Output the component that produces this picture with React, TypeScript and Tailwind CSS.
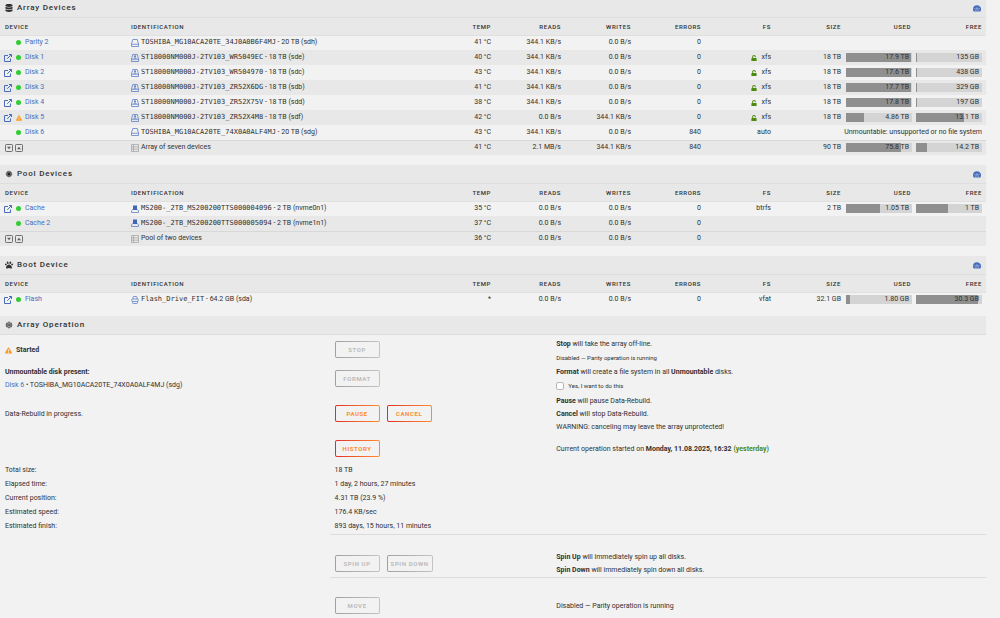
import React from "react";
import { FaDatabase, FaPaw, FaExclamationTriangle, FaUnlock } from "react-icons/fa";

type Status = "ok" | "warn";
type DriveKind = "drive" | "user" | "nvme" | "usb";
type Meter = { text: string; pct: number };

interface Device {
  name: string;
  status: Status;
  browse?: boolean;
  kind: DriveKind;
  id: string;
  detail: string;
  temp: string;
  reads: string;
  writes: string;
  errors: string;
  fs?: string;
  locked?: boolean;
  size?: string;
  used?: Meter;
  free?: Meter;
  message?: string;
}

interface Total {
  label: string;
  temp: string;
  reads: string;
  writes: string;
  errors: string;
  size?: string;
  used?: Meter;
  free?: Meter;
}

const rate = { reads: "344.1 KB/s", writes: "0.0 B/s", errors: "0" };

const arrayDevices: Device[] = [
  { name: "Parity 2", status: "ok", kind: "drive", id: "TOSHIBA_MG10ACA20TE_34J0A0B6F4MJ", detail: "20 TB (sdh)", temp: "41 °C", ...rate },
  { name: "Disk 1", status: "ok", browse: true, kind: "user", id: "ST18000NM000J-2TV103_WR5049EC", detail: "18 TB (sde)", temp: "40 °C", ...rate, fs: "xfs", locked: true, size: "18 TB", used: { text: "17.9 TB", pct: 99 }, free: { text: "135 GB", pct: 1 } },
  { name: "Disk 2", status: "ok", browse: true, kind: "user", id: "ST18000NM000J-2TV103_WR504970", detail: "18 TB (sdc)", temp: "43 °C", ...rate, fs: "xfs", locked: true, size: "18 TB", used: { text: "17.6 TB", pct: 98 }, free: { text: "438 GB", pct: 2 } },
  { name: "Disk 3", status: "ok", browse: true, kind: "user", id: "ST18000NM000J-2TV103_ZR52X6DG", detail: "18 TB (sdb)", temp: "41 °C", ...rate, fs: "xfs", locked: true, size: "18 TB", used: { text: "17.7 TB", pct: 98 }, free: { text: "329 GB", pct: 2 } },
  { name: "Disk 4", status: "ok", browse: true, kind: "user", id: "ST18000NM000J-2TV103_ZR52X75V", detail: "18 TB (sdd)", temp: "38 °C", ...rate, fs: "xfs", locked: true, size: "18 TB", used: { text: "17.8 TB", pct: 99 }, free: { text: "197 GB", pct: 1 } },
  { name: "Disk 5", status: "warn", browse: true, kind: "user", id: "ST18000NM000J-2TV103_ZR52X4M8", detail: "18 TB (sdf)", temp: "42 °C", reads: "0.0 B/s", writes: "344.1 KB/s", errors: "0", fs: "xfs", locked: true, size: "18 TB", used: { text: "4.86 TB", pct: 27 }, free: { text: "13.1 TB", pct: 73 } },
  { name: "Disk 6", status: "ok", kind: "drive", id: "TOSHIBA_MG10ACA20TE_74X0A0ALF4MJ", detail: "20 TB (sdg)", temp: "43 °C", reads: "344.1 KB/s", writes: "0.0 B/s", errors: "840", fs: "auto", message: "Unmountable: unsupported or no file system" },
];

const poolDevices: Device[] = [
  { name: "Cache", status: "ok", browse: true, kind: "nvme", id: "MS200-_2TB_MS200200TTS000004096", detail: "2 TB (nvme0n1)", temp: "35 °C", reads: "0.0 B/s", writes: "0.0 B/s", errors: "0", fs: "btrfs", size: "2 TB", used: { text: "1.05 TB", pct: 51 }, free: { text: "1 TB", pct: 49 } },
  { name: "Cache 2", status: "ok", kind: "nvme", id: "MS200-_2TB_MS200200TTS000005094", detail: "2 TB (nvme1n1)", temp: "37 °C", reads: "0.0 B/s", writes: "0.0 B/s", errors: "0" },
];

const bootDevices: Device[] = [
  { name: "Flash", status: "ok", browse: true, kind: "usb", id: "Flash_Drive_FIT", detail: "64.2 GB (sda)", temp: "*", reads: "0.0 B/s", writes: "0.0 B/s", errors: "0", fs: "vfat", size: "32.1 GB", used: { text: "1.80 GB", pct: 6 }, free: { text: "30.3 GB", pct: 94 } },
];

function DiscIcon() {
  return (
    <svg viewBox="0 0 16 16" className="size-2" aria-hidden="true">
      <circle cx="8" cy="8" r="5.5" fill="#666" stroke="#555" strokeWidth="2" strokeDasharray="2 1" />
      <circle cx="8" cy="8" r="2.5" fill="#222" />
    </svg>
  );
}

function SnowflakeIcon() {
  return (
    <svg viewBox="0 0 16 16" className="size-2" fill="none" stroke="#444" strokeWidth="1.5" aria-hidden="true">
      <path d="M8 1v14M2 4.500l12 7M14 4.500l-12 7" />
      <path d="M5.500 2 8 4.500 10.500 2M5.500 14 8 11.500 10.500 14M1.500 7.500 5 6.500 4 3M14.500 8.500 11 9.500l1 3.500M14.500 7.500 11 6.500 12 3M1.500 8.500 5 9.500l-1 3.500" />
    </svg>
  );
}

function GaugeIcon() {
  return (
    <svg viewBox="0 0 16 14" className="h-[7px] w-2" aria-hidden="true">
      <path d="M8 0.500A8 8 0 0 0 0 8.500c0 1.700.5 3.200 1.300 4.500h13.400A8 8 0 0 0 8 .5Z" fill="#486dba" />
      <path d="M5.500 12 6.500 6h3l1 6" fill="none" stroke="#c3cde2" strokeWidth="1.300" />
      <circle cx="3.300" cy="7" r="0.800" fill="#c3cde2" />
      <circle cx="12.700" cy="7" r="0.800" fill="#c3cde2" />
    </svg>
  );
}

function BrowseIcon() {
  return (
    <svg viewBox="0 0 16 16" className="size-2" fill="none" stroke="#486dba" strokeWidth="2" aria-hidden="true">
      <path d="M8 3H1v12h12V9" />
      <path d="M10 1h5v5M15 1 6.500 9.500" />
    </svg>
  );
}

function DriveIcon({ kind }: { kind: DriveKind }) {
  return (
    <svg viewBox="0 0 16 16" className="size-2 shrink-0" fill="none" stroke="#5f80c4" strokeWidth="1.600" strokeLinejoin="round" aria-hidden="true">
      {kind === "usb" && (
        <>
          <path d="M4 6V2.500Q4 1 5.500 1h5Q12 1 12 2.500V6" />
          <rect x="1.500" y="6" width="13" height="5" rx="1.500" />
          <path d="M3 11v2.500Q3 15 4.500 15h7q1.500 0 1.500-1.500V11" />
        </>
      )}
      {kind === "nvme" && (
        <>
          <path d="M4 1h8v7l1 2H3l1-2Z" fill="#3f66b8" stroke="none" />
          <path d="M3.500 9.500 1 11.500V15h14v-3.500L12.500 9.500" />
        </>
      )}
      {(kind === "drive" || kind === "user") && (
        <>
          <path d="M1 10 3.500 1h9L15 10v5H1Z" />
          <path d="M1 10.500h14" />
        </>
      )}
      {kind === "user" && (
        <>
          <circle cx="8" cy="4.500" r="1.800" fill="#486dba" stroke="none" />
          <path d="M4.500 9Q8 4.500 11.500 9Z" fill="#486dba" stroke="none" />
        </>
      )}
    </svg>
  );
}

function ListIcon() {
  return (
    <svg viewBox="0 0 16 16" className="size-2 shrink-0" fill="none" stroke="#9a9a9a" strokeWidth="1.300" aria-hidden="true">
      <path d="M1 1h14v14H1ZM1 5.700h14M1 10.300h14M5 1v14" />
    </svg>
  );
}

function ToggleButton({ up }: { up?: boolean }) {
  return (
    <button type="button" aria-label={up ? "Spin up" : "Spin down"} className="size-2">
      <svg viewBox="0 0 16 16" className="size-2" fill="none" stroke="#707070" strokeWidth="2" aria-hidden="true">
        <rect x="1" y="1" width="14" height="14" rx="1.500" />
        <path d={up ? "M4 10.500h8L8 5.500Z" : "M4 5.500h8L8 10.500Z"} fill="#606060" stroke="none" />
      </svg>
    </button>
  );
}

function SectionTitle({ icon, title, gauge }: { icon: React.ReactNode; title: string; gauge?: boolean }) {
  return (
    <div className="flex h-[19px] items-center justify-between border-b border-[#dedede] bg-[#e8e8e8] px-[5px]">
      <h2 className="flex items-center gap-1 text-[8px] leading-none font-medium tracking-[0.1em]">
        {icon}
        {title}
      </h2>
      {gauge && (
        <a href="#stats" aria-label={title + " statistics"}>
          <GaugeIcon />
        </a>
      )}
    </div>
  );
}

function UsageBar({ meter }: { meter: Meter }) {
  return (
    <div className="relative h-[9px] bg-[#d4d4d4]">
      <div className="absolute inset-y-0 left-0 bg-[#8f8f8f]" style={{ width: meter.pct + "%" }} />
      <span className="absolute inset-0 pr-[3px] leading-[9px]">{meter.text}</span>
    </div>
  );
}

const numeric = ["Temp", "Reads", "Writes", "Errors", "FS", "Size", "Used", "Free"];

function DeviceTable({ devices, total }: { devices: Device[]; total?: Total }) {
  return (
    <table className="w-full table-fixed border-collapse">
      <colgroup>
        <col className="w-[131px]" />
        <col />
        {numeric.map((n) => (
          <col key={n} className={n === "Free" ? "w-[72px]" : "w-[70px]"} />
        ))}
      </colgroup>
      <thead>
        <tr className="h-[17px] border-b border-[#e0e0e0] bg-[#e8e8e8] text-[6px] tracking-[0.1em] uppercase">
          <th className="pl-[5px] text-left font-medium">Device</th>
          <th className="text-left font-medium">Identification</th>
          {numeric.map((n) => (
            <th key={n} className={n === "Free" ? "pr-1 text-right font-medium" : "pr-[3px] text-right font-medium"}>
              {n}
            </th>
          ))}
        </tr>
      </thead>
      <tbody>
        {devices.map((d) => (
          <tr key={d.name} className="h-[15px] text-right even:bg-[#e8e8e8]">
            <td className="pl-1 text-left">
              <div className="flex items-center">
                <span className="w-[12px]">
                  {d.browse && (
                    <a href="#browse" aria-label={"Browse " + d.name}>
                      <BrowseIcon />
                    </a>
                  )}
                </span>
                <span className="w-[9px]">
                  {d.status === "ok" ? (
                    <span className="block size-[5px] rounded-full bg-[#33cc33]" />
                  ) : (
                    <FaExclamationTriangle className="size-[6px] text-[#ff9a1f]" />
                  )}
                </span>
                <a href="#device" className="text-[#486dba]">
                  {d.name}
                </a>
              </div>
            </td>
            <td className="text-left">
              <div className="flex items-center gap-[2px] whitespace-nowrap">
                <DriveIcon kind={d.kind} />
                <span>
                  <span className="font-['DejaVu_Sans_Mono','Liberation_Mono',monospace]">{d.id}</span> - {d.detail}
                </span>
              </div>
            </td>
            <td className="pr-[3px]">{d.temp}</td>
            <td className="pr-[3px]">{d.reads}</td>
            <td className="pr-[3px]">{d.writes}</td>
            <td className="pr-[3px]">{d.errors}</td>
            <td className="pr-[3px]">
              <div className="flex items-center justify-end gap-1">
                {d.locked && <FaUnlock className="size-[6px] text-[#4f8a10]" />}
                {d.fs}
              </div>
            </td>
            {d.message ? (
              <td colSpan={3} className="pr-1 whitespace-nowrap">
                {d.message}
              </td>
            ) : (
              <>
                <td className="pr-[3px]">{d.size}</td>
                <td className="px-[2px]">{d.used && <UsageBar meter={d.used} />}</td>
                <td className="pr-1 pl-[2px]">{d.free && <UsageBar meter={d.free} />}</td>
              </>
            )}
          </tr>
        ))}
      </tbody>
      {total && (
        <tfoot>
          <tr className="h-[15px] border-t border-[#d8d8d8] bg-[#e8e8e8] text-right">
            <td className="pl-[5px]">
              <div className="flex gap-[2px]">
                <ToggleButton />
                <ToggleButton up />
              </div>
            </td>
            <td className="text-left">
              <div className="flex items-center gap-[2px] whitespace-nowrap">
                <ListIcon />
                {total.label}
              </div>
            </td>
            <td className="pr-[3px]">{total.temp}</td>
            <td className="pr-[3px]">{total.reads}</td>
            <td className="pr-[3px]">{total.writes}</td>
            <td className="pr-[3px]">{total.errors}</td>
            <td />
            <td className="pr-[3px]">{total.size}</td>
            <td className="px-[2px]">{total.used && <UsageBar meter={total.used} />}</td>
            <td className="pr-1 pl-[2px]">{total.free && <UsageBar meter={total.free} />}</td>
          </tr>
        </tfoot>
      )}
    </table>
  );
}

function OpButton({ label, disabled }: { label: string; disabled?: boolean }) {
  return (
    <button
      type="button"
      disabled={disabled}
      className="flex h-[17px] min-w-[45px] rounded-[2px] bg-linear-to-r from-[#e22828] to-[#ff8c2f] p-px text-[6px] font-bold tracking-[0.1em] text-[#ff8c2f] uppercase disabled:from-[#a0a0a0] disabled:to-[#c4c4c4] disabled:text-[#bcbcbc]"
    >
      <span className="flex h-full w-full items-center justify-center rounded-[1px] bg-[#f2f2f2] px-[3px] whitespace-nowrap">{label}</span>
    </button>
  );
}

function OpRow({ left, middle, right, className }: { left?: React.ReactNode; middle: React.ReactNode; right?: React.ReactNode; className: string }) {
  return (
    <div className={"grid grid-cols-[33.6%_22.6%_1fr] items-center pl-[5px] " + className}>
      <div className="pt-[2px]">{left}</div>
      <div className="flex items-center gap-[7px]">{middle}</div>
      <div className="pt-[2px]">{right}</div>
    </div>
  );
}

const progress: [string, string][] = [
  ["Total size:", "18 TB"],
  ["Elapsed time:", "1 day, 2 hours, 27 minutes"],
  ["Current position:", "4.31 TB (23.9 %)"],
  ["Estimated speed:", "176.4 KB/sec"],
  ["Estimated finish:", "893 days, 15 hours, 11 minutes"],
];

export default function App() {
  return (
    <main className="flex min-h-screen flex-col bg-[#f2f2f2] pr-[14px] font-[Roboto,'Noto_Sans',sans-serif] text-[7px] leading-[13px] text-[#303030]">
      <section className="-mt-px">
        <SectionTitle icon={<FaDatabase className="size-2" />} title="Array Devices" gauge />
        <DeviceTable
          devices={arrayDevices}
          total={{ label: "Array of seven devices", temp: "41 °C", reads: "2.1 MB/s", writes: "344.1 KB/s", errors: "840", size: "90 TB", used: { text: "75.8 TB", pct: 84 }, free: { text: "14.2 TB", pct: 16 } }}
        />
      </section>
      <section className="mt-[10px]">
        <SectionTitle icon={<DiscIcon />} title="Pool Devices" gauge />
        <DeviceTable devices={poolDevices} total={{ label: "Pool of two devices", temp: "36 °C", reads: "0.0 B/s", writes: "0.0 B/s", errors: "0" }} />
      </section>
      <section className="mt-[10px]">
        <SectionTitle icon={<FaPaw className="size-2" />} title="Boot Device" gauge />
        <DeviceTable devices={bootDevices} />
      </section>
      <section className="mt-[9px]">
        <SectionTitle icon={<SnowflakeIcon />} title="Array Operation" />
        <OpRow
          className="h-[29px]"
          left={
            <p className="flex items-center gap-1 font-bold">
              <FaExclamationTriangle className="size-[7px] text-[#ff9a1f]" />
              Started
            </p>
          }
          middle={<OpButton label="Stop" disabled />}
          right={
            <>
              <p>
                <b>Stop</b> will take the array off-line.
              </p>
              <p className="text-[6px]">Disabled — Parity operation is running</p>
            </>
          }
        />
        <OpRow
          className="h-7"
          left={
            <>
              <p className="font-bold">Unmountable disk present:</p>
              <p>
                <a href="#device" className="text-[#486dba]">
                  Disk 6
                </a>{" "}
                • TOSHIBA_MG10ACA20TE_74X0A0ALF4MJ (sdg)
              </p>
            </>
          }
          middle={<OpButton label="Format" disabled />}
          right={
            <>
              <p>
                <b>Format</b> will create a file system in all <b>Unmountable</b> disks.
              </p>
              <label className="flex items-center gap-1 text-[6px]">
                <input type="checkbox" className="size-2 appearance-none rounded-[2px] border border-[#b8b8b8] bg-white checked:bg-[#486dba]" />
                Yes, I want to do this
              </label>
            </>
          }
        />
        <OpRow
          className="h-[42px]"
          left="Data-Rebuild in progress."
          middle={
            <>
              <OpButton label="Pause" />
              <OpButton label="Cancel" />
            </>
          }
          right={
            <>
              <p>
                <b>Pause</b> will pause Data-Rebuild.
              </p>
              <p>
                <b>Cancel</b> will stop Data-Rebuild.
              </p>
              <p>WARNING: canceling may leave the array unprotected!</p>
            </>
          }
        />
        <OpRow
          className="h-7"
          middle={<OpButton label="History" />}
          right={
            <p>
              Current operation started on <b>Monday, 11.08.2025, 16:32</b> <span className="font-bold text-[#4f8a10]">(yesterday)</span>
            </p>
          }
        />
        {progress.map(([label, value]) => (
          <OpRow key={label} className="h-[14px]" left={label} middle={<span className="pt-[2px]">{value}</span>} />
        ))}
        <hr className="mt-[2px] ml-[33.5%] border-[#dcdcdc]" />
        <OpRow
          className="mt-[14px] h-7"
          middle={
            <>
              <OpButton label="Spin up" disabled />
              <OpButton label="Spin down" disabled />
            </>
          }
          right={
            <>
              <p>
                <b>Spin Up</b> will immediately spin up all disks.
              </p>
              <p>
                <b>Spin Down</b> will immediately spin down all disks.
              </p>
            </>
          }
        />
        <hr className="ml-[33.5%] border-[#dcdcdc]" />
        <OpRow className="mt-[19px] h-[17px]" middle={<OpButton label="Move" disabled />} right="Disabled — Parity operation is running" />
      </section>
    </main>
  );
}
